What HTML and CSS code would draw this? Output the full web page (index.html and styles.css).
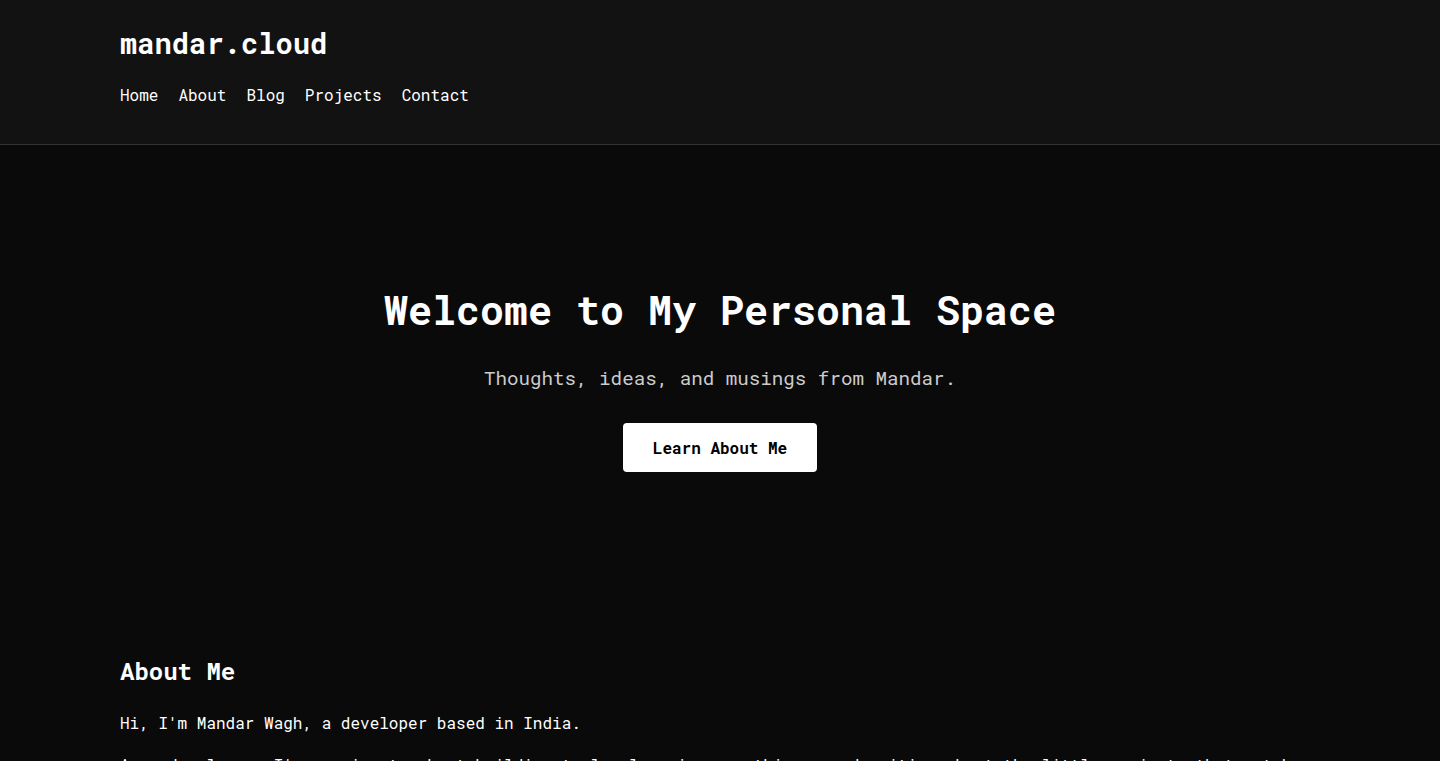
FILE: index.html
```html
<!DOCTYPE html>
<html lang="en">
<head>
  <meta charset="UTF-8">
  <title>mandar.cloud</title>
  <link rel="stylesheet" href="styles.css">
</head>
<body>
<header class="site-header">
  <div class="container">
    <a class="logo" href="#">mandar.cloud</a>
    <nav class="nav">
      <a href="#">Home</a>
      <a href="#">About</a>
      <a href="#">Blog</a>
      <a href="#">Projects</a>
      <a href="#">Contact</a>
    </nav>
  </div>
</header>

<section class="hero">
  <h1>Welcome to My Personal Space</h1>
  <p class="tagline">Thoughts, ideas, and musings from Mandar.</p>
  <a class="btn" href="#about">Learn About Me</a>
</section>

<section class="about" id="about">
  <div class="container">
    <h2>About Me</h2>
    <p>Hi, I'm Mandar Wagh, a developer based in India.</p>
    <p>As a developer, I'm passionate about building tools, learning new things, and writing about the little projects that catch my eye.</p>
  </div>
</section>
</body>
</html>
```

FILE: styles.css
```css
* {
  box-sizing: border-box;
}
body {
  margin: 0;
  background-color: #0a0a0a;
  color: #fff;
  font-family: "Roboto Mono", "DejaVu Sans Mono", monospace;
  font-size: 16px;
  line-height: 1.6;
}
a {
  color: inherit;
  text-decoration: none;
}
.container {
  max-width: 1200px;
  margin: 0 auto;
}

/* header */
.site-header {
  background-color: #121212;
  border-bottom: 1px solid #333;
  padding: 23px 0 36px;
}
.logo {
  display: block;
  font-size: 28.8px;
  font-weight: 700;
  line-height: 40px;
}
.nav {
  display: flex;
  gap: 20px;
  margin-top: 19px;
}
.nav a {
  font-size: 16px;
  line-height: 26px;
}

/* hero */
.hero {
  text-align: center;
  padding: 141px 0 140px;
}
.hero h1 {
  margin: 0;
  font-size: 40px;
  line-height: 48px;
  font-weight: 700;
}
.tagline {
  margin: 29px 0 30px;
  font-size: 19.2px;
  line-height: 30px;
  color: #ccc;
}
.btn {
  display: inline-block;
  background-color: #fff;
  color: #000;
  font-weight: 700;
  font-size: 16px;
  line-height: 19px;
  padding: 15px 30px;
  border-radius: 4px;
}

/* about */
.about {
  padding-top: 45px;
}
.about h2 {
  margin: 0 0 24px;
  font-size: 24px;
  line-height: 29px;
  font-weight: 700;
}
.about p {
  margin: 0 0 16px;
}
```
